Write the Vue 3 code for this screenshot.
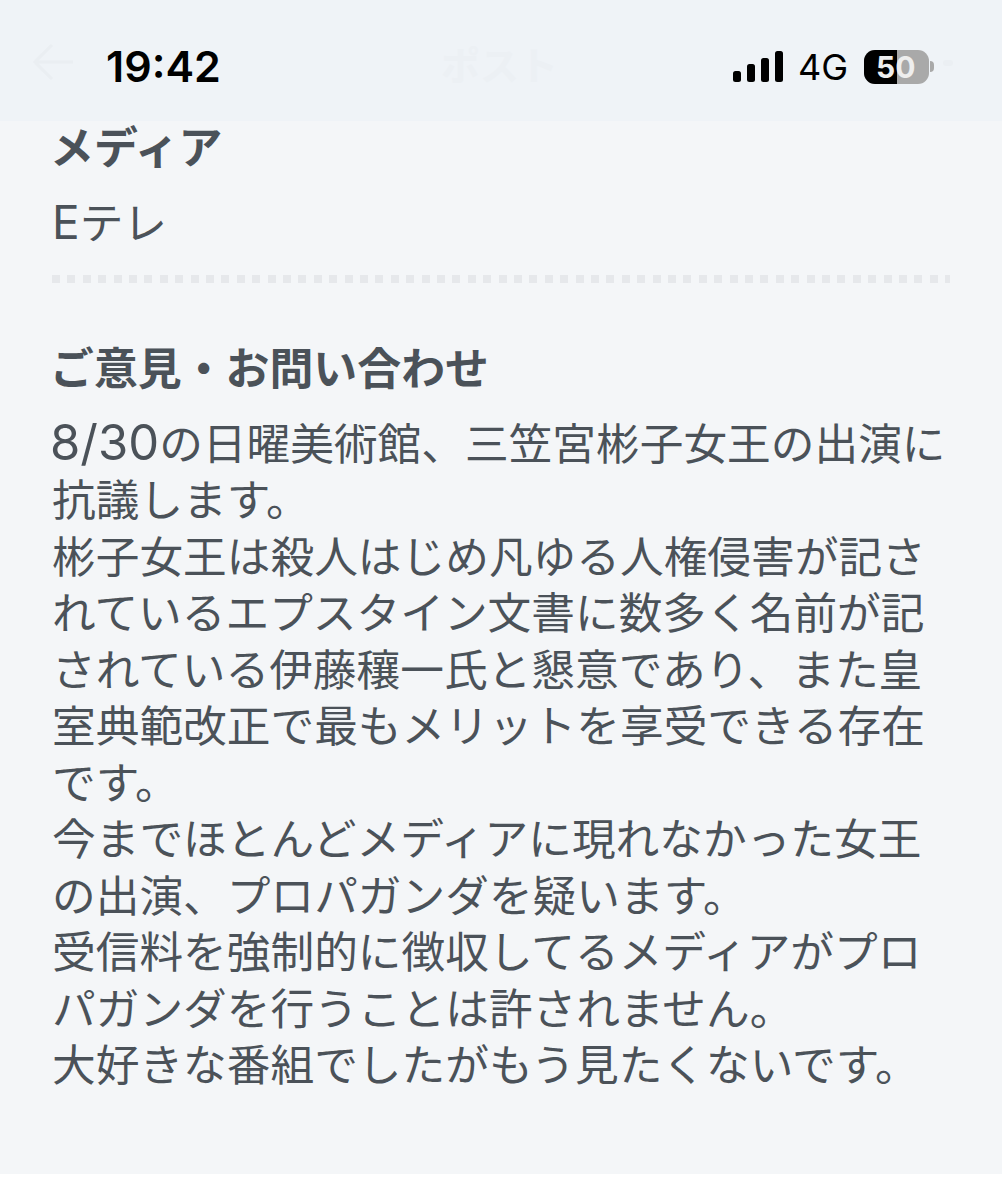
<script setup>
const lines = [
  '抗議します。',
  '彬子女王は殺人はじめ凡ゆる人権侵害が記さ',
  'れているエプスタイン文書に数多く名前が記',
  'されている伊藤穰一氏と懇意であり、また皇',
  '室典範改正で最もメリットを享受できる存在',
  'です。',
  '今までほとんどメディアに現れなかった女王',
  'の出演、プロパガンダを疑います。',
  '受信料を強制的に徴収してるメディアがプロ',
  'パガンダを行うことは許されません。',
  '大好きな番組でしたがもう見たくないです。'
]
</script>

<template>
  <div class="page">
    <header class="top">
      <div class="left">
        <svg class="arrow" width="44" height="38" viewBox="0 0 44 38" fill="none" stroke="#eaeef2" stroke-width="3">
          <path d="M42 19H4M21 2L4 19l17 17" />
        </svg>
        <span class="time">19:42</span>
      </div>
      <span class="title">ポスト</span>
      <div class="status">
        <svg width="50" height="31" viewBox="0 0 50 31" fill="#000">
          <rect x="0" y="20" width="8" height="11" rx="2.5" />
          <rect x="14" y="13" width="8" height="18" rx="2.5" />
          <rect x="28" y="7" width="8" height="24" rx="2.5" />
          <rect x="42" y="0" width="8" height="31" rx="2.5" />
        </svg>
        <span class="net">4G</span>
        <div class="battery">
          <div class="cell">
            <div class="fill"></div>
            <span class="pct">50</span>
          </div>
          <span class="nub"></span>
        </div>
      </div>
      <span class="ghost"></span>
    </header>

    <main class="body">
      <h2 class="head first">メディア</h2>
      <p class="media"><span class="latin-e">E</span>テレ</p>
      <div class="dots"></div>
      <h2 class="head second">ご意見・お問い合わせ</h2>
      <div class="text">
        <div class="line"><span class="num">8/30</span>の日曜美術館、三笠宮彬子女王の出演に</div>
        <div v-for="line in lines" :key="line" class="line">{{ line }}</div>
      </div>
    </main>
  </div>
</template>

<style>
html, body { margin: 0; background: #fff; }
</style>

<style scoped>
.page {
  width: 1002px;
  height: 1200px;
  background: #fff;
  overflow: hidden;
  font-family: "Noto Sans CJK JP", sans-serif;
}
.top {
  height: 121px;
  background: #eff3f7;
  display: flex;
  align-items: center;
  justify-content: space-between;
  padding: 0 68px 0 30px;
  position: relative;
  box-sizing: border-box;
}
.left {
  display: flex;
  align-items: center;
  gap: 32px;
  padding-top: 11px;
}
.arrow { margin-top: -8px; margin-left: 1px; margin-right: -1px; }
.time {
  font-family: "Inter", sans-serif;
  font-size: 43px;
  font-weight: 600;
  color: #000;
  line-height: 1;
}
.title {
  position: absolute;
  left: 441px;
  top: 38px;
  font-size: 39px;
  line-height: 50px;
  font-weight: 700;
  color: #ecf0f4;
}
.ghost {
  position: absolute;
  left: 943px;
  top: 60px;
  width: 10px;
  height: 6px;
  border-radius: 3px;
  background: #ebeff3;
}
.status {
  display: flex;
  align-items: center;
  padding-top: 12px;
}
.net {
  font-family: "Inter", sans-serif;
  font-size: 36px;
  font-weight: 400;
  color: #000;
  margin-left: 15px;
  line-height: 1;
}
.battery {
  display: flex;
  align-items: center;
  margin-left: 16px;
}
.cell {
  position: relative;
  width: 65px;
  height: 34px;
  border-radius: 11px;
  background: #a9a9a9;
  overflow: hidden;
}
.fill {
  width: 33px;
  height: 100%;
  background: #000;
}
.pct {
  position: absolute;
  left: 12px;
  top: 0;
  font-family: "Inter", sans-serif;
  font-size: 30px;
  line-height: 34px;
  font-weight: 700;
  color: #eee;
}
.nub {
  width: 4px;
  height: 11px;
  background: #a9a9a9;
  border-radius: 0 4px 4px 0;
  margin-left: 1px;
}
.body {
  height: 1053px;
  background: #f4f6f8;
  box-sizing: border-box;
  padding: 0 52px;
  color: #4b5259;
}
.head {
  margin: 0 0 0 -2px;
  font-size: 43.9px;
  font-weight: 700;
  line-height: 46px;
}
.first { padding-top: 1px; }
.media {
  margin: 27px 0 0;
  font-size: 43.7px;
  line-height: 50px;
}
.latin-e {
  font-family: "Inter", sans-serif;
  font-size: 46px;
  line-height: 1;
}
.dots {
  height: 8px;
  width: 898px;
  margin-top: 30px;
  background: repeating-linear-gradient(90deg, #e6e8eb 0 8px, transparent 8px 15.4px);
}
.second { margin-top: 60px; margin-left: -2px; }
.text { margin-top: 24px; }
.line {
  font-size: 43.7px;
  line-height: 56.45px;
  white-space: nowrap;
}
.num {
  font-family: "Inter", sans-serif;
  font-size: 49px;
  line-height: 1;
  font-weight: 400;
  margin-left: -2px;
}
</style>
